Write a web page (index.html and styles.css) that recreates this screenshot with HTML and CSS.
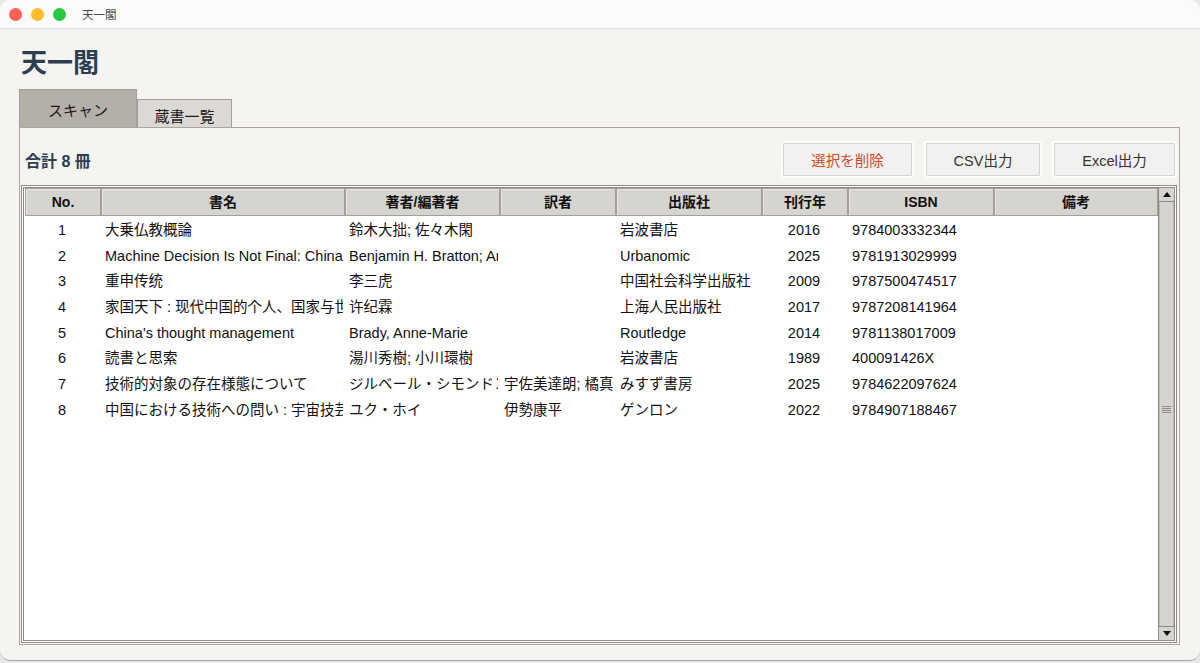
FILE: index.html
```html
<!DOCTYPE html>
<html lang="ja">
<head>
<meta charset="utf-8">
<title>天一閣</title>
<link rel="stylesheet" href="styles.css">
</head>
<body>
<div class="window">
  <div class="titlebar">
    <span class="light red"></span>
    <span class="light yellow"></span>
    <span class="light green"></span>
    <span class="win-title">天一閣</span>
  </div>
  <div class="content">
    <h1 class="app-title">天一閣</h1>
    <div class="tabs">
      <div class="tab active">スキャン</div>
      <div class="tab">蔵書一覧</div>
    </div>
    <div class="panel">
      <div class="toolbar">
        <div class="total">合計 8 冊</div>
        <div class="buttons">
          <button class="btn btn-delete">選択を削除</button>
          <button class="btn btn-csv">CSV出力</button>
          <button class="btn btn-excel">Excel出力</button>
        </div>
      </div>
      <div class="table-frame">
        <div class="table-wrap">
          <table class="books">
            <colgroup>
              <col class="c-no"><col class="c-title"><col class="c-author"><col class="c-trans"><col class="c-pub"><col class="c-year"><col class="c-isbn"><col class="c-note">
            </colgroup>
            <thead>
              <tr><th>No.</th><th>書名</th><th>著者/編著者</th><th>訳者</th><th>出版社</th><th>刊行年</th><th>ISBN</th><th>備考</th></tr>
            </thead>
            <tbody>
              <tr><td class="center">1</td><td>大乗仏教概論</td><td>鈴木大拙; 佐々木閑</td><td></td><td>岩波書店</td><td class="center">2016</td><td>9784003332344</td><td></td></tr>
              <tr><td class="center">2</td><td>Machine Decision Is Not Final: China and the History and Future of Artificial Intelligence</td><td>Benjamin H. Bratton; Anna Greenspan; Bogna Konior</td><td></td><td>Urbanomic</td><td class="center">2025</td><td>9781913029999</td><td></td></tr>
              <tr><td class="center">3</td><td>重申传统</td><td>李三虎</td><td></td><td>中国社会科学出版社</td><td class="center">2009</td><td>9787500474517</td><td></td></tr>
              <tr><td class="center">4</td><td>家国天下 : 现代中国的个人、国家与世界认同</td><td>许纪霖</td><td></td><td>上海人民出版社</td><td class="center">2017</td><td>9787208141964</td><td></td></tr>
              <tr><td class="center">5</td><td>China's thought management</td><td>Brady, Anne-Marie</td><td></td><td>Routledge</td><td class="center">2014</td><td>9781138017009</td><td></td></tr>
              <tr><td class="center">6</td><td>読書と思索</td><td>湯川秀樹; 小川環樹</td><td></td><td>岩波書店</td><td class="center">1989</td><td>400091426X</td><td></td></tr>
              <tr><td class="center">7</td><td>技術的対象の存在様態について</td><td>ジルベール・シモンドン</td><td>宇佐美達朗; 橘真一</td><td>みすず書房</td><td class="center">2025</td><td>9784622097624</td><td></td></tr>
              <tr><td class="center">8</td><td>中国における技術への問い : 宇宙技芸試論</td><td>ユク・ホイ</td><td>伊勢康平</td><td>ゲンロン</td><td class="center">2022</td><td>9784907188467</td><td></td></tr>
            </tbody>
          </table>
        </div>
        <div class="scrollbar">
          <div class="sb-btn sb-up"><span class="tri-up"></span></div>
          <div class="sb-track">
            <div class="grip"><span></span><span></span><span></span><span></span></div>
          </div>
          <div class="sb-btn sb-down"><span class="tri-down"></span></div>
        </div>
      </div>
    </div>
  </div>
</div>
</body>
</html>
```
FILE: styles.css
```css
* { box-sizing: border-box; }
html, body { margin: 0; padding: 0; }
body {
  width: 1200px;
  height: 663px;
  overflow: hidden;
  background: #e9e9e9;
  font-family: "Liberation Sans", "Noto Sans CJK JP", sans-serif;
  color: #111;
}
.window {
  height: 661px;
  background: #f5f4f0;
  border-radius: 10px;
  border-bottom: 1px solid #a6a6a6;
  overflow: hidden;
  display: flex;
  flex-direction: column;
}
.titlebar {
  height: 29px;
  flex: none;
  background: #fbfbfb;
  border-bottom: 1px solid #e0dfdc;
  display: flex;
  align-items: center;
  padding-left: 9px;
}
.light {
  width: 13px;
  height: 13px;
  border-radius: 50%;
  margin-right: 9px;
}
.light.red { background: #fe5f57; }
.light.yellow { background: #febc2e; }
.light.green { background: #28c840; }
.win-title {
  margin-left: 7px;
  font-size: 11.5px;
  color: #4a4a4a;
}
.content {
  flex: 1;
  display: flex;
  flex-direction: column;
  padding: 0 20px 15px 19px;
}
.app-title {
  margin: 19px 0 0 2px;
  height: 30px;
  line-height: 30px;
  font-size: 26px;
  font-weight: bold;
  color: #2c3e50;
}
.tabs {
  margin-top: 11px;
  height: 38px;
  display: flex;
  align-items: flex-end;
}
.tab {
  width: 95px;
  height: 28px;
  padding-top: 5px;
  line-height: 24px;
  text-align: center;
  font-size: 15px;
  color: #1a1a1a;
  background: #dcd9d4;
  border: 1px solid #a3a09a;
  border-bottom: none;
}
.tab.active {
  width: 118px;
  height: 38px;
  padding-top: 3px;
  line-height: 35px;
  background: #b4b0a7;
}
.panel {
  flex: 1;
  display: flex;
  flex-direction: column;
  background: #f5f4f0;
  border: 1px solid #a9a69f;
  padding: 0 2px 1px 1px;
}
.toolbar {
  margin-top: 15px;
  height: 33px;
  display: flex;
  align-items: center;
  justify-content: space-between;
  padding: 0 2px 0 4px;
}
.total {
  font-size: 16px;
  font-weight: bold;
  color: #2c3e50;
}
.buttons {
  display: flex;
  gap: 14px;
}
.btn {
  height: 33px;
  font-family: "Liberation Sans", "Noto Sans CJK JP", sans-serif;
  font-size: 14.5px;
  color: #333;
  background: #f1f1f0;
  border: 1px solid #d4d4d2;
  border-radius: 1px;
  box-shadow: 0 0 0 2px #fcfcfb;
  padding: 0;
}
.btn-delete { width: 129px; color: #cc4a2c; }
.btn-csv { width: 114px; }
.btn-excel { width: 121px; }
.table-frame {
  margin-top: 9px;
  flex: 1;
  display: flex;
  background: #fff;
  border: 3px double #8e8b85;
}
.table-wrap {
  flex: 1;
  padding: 0 0 0 1px;
  overflow: hidden;
}
.books {
  table-layout: fixed;
  width: 1133px;
  border-collapse: separate;
  border-spacing: 0;
}
.c-no { width: 76px; }
.c-title { width: 244px; }
.c-author { width: 155px; }
.c-trans { width: 116px; }
.c-pub { width: 146px; }
.c-year { width: 86px; }
.c-isbn { width: 146px; }
.c-note { width: 164px; }
.books th {
  height: 28px;
  padding: 0;
  font-size: 14px;
  line-height: 17px;
  font-weight: bold;
  color: #111;
  text-align: center;
  background: #d6d4cf;
  border: 1px solid #a3a09a;
  box-shadow: inset 1px 1px 0 #e9e7e3;
}
.books tbody tr { height: 25.7px; }
.books td {
  height: 25.7px;
  padding: 3px 0 0 4px;
  font-size: 14.5px;
  line-height: 17px;
  white-space: nowrap;
  overflow: hidden;
  border-right: 2px solid #fff;
  vertical-align: middle;
}
.books td.center { text-align: center; padding-left: 0; }
.scrollbar {
  width: 16px;
  flex: none;
  display: flex;
  flex-direction: column;
  background: #d6d4cf;
  border-left: 1px solid #8e8b85;
}
.sb-btn {
  height: 14px;
  flex: none;
  display: flex;
  align-items: center;
  justify-content: center;
}
.sb-up { border-bottom: 1px solid #8e8b85; }
.sb-down { border-top: 1px solid #8e8b85; }
.tri-up {
  width: 0; height: 0;
  border-left: 4px solid transparent;
  border-right: 4px solid transparent;
  border-bottom: 5px solid #111;
}
.tri-down {
  width: 0; height: 0;
  border-left: 4px solid transparent;
  border-right: 4px solid transparent;
  border-top: 5px solid #111;
}
.sb-track {
  flex: 1;
  display: flex;
  align-items: center;
  justify-content: center;
  border-left: 1px solid #bab7b0;
  border-right: 1px solid #bab7b0;
  padding-bottom: 10px;
}
.grip {
  display: flex;
  flex-direction: column;
  gap: 1px;
}
.grip span {
  display: block;
  width: 9px;
  height: 1px;
  background: #8e8b85;
}
```
